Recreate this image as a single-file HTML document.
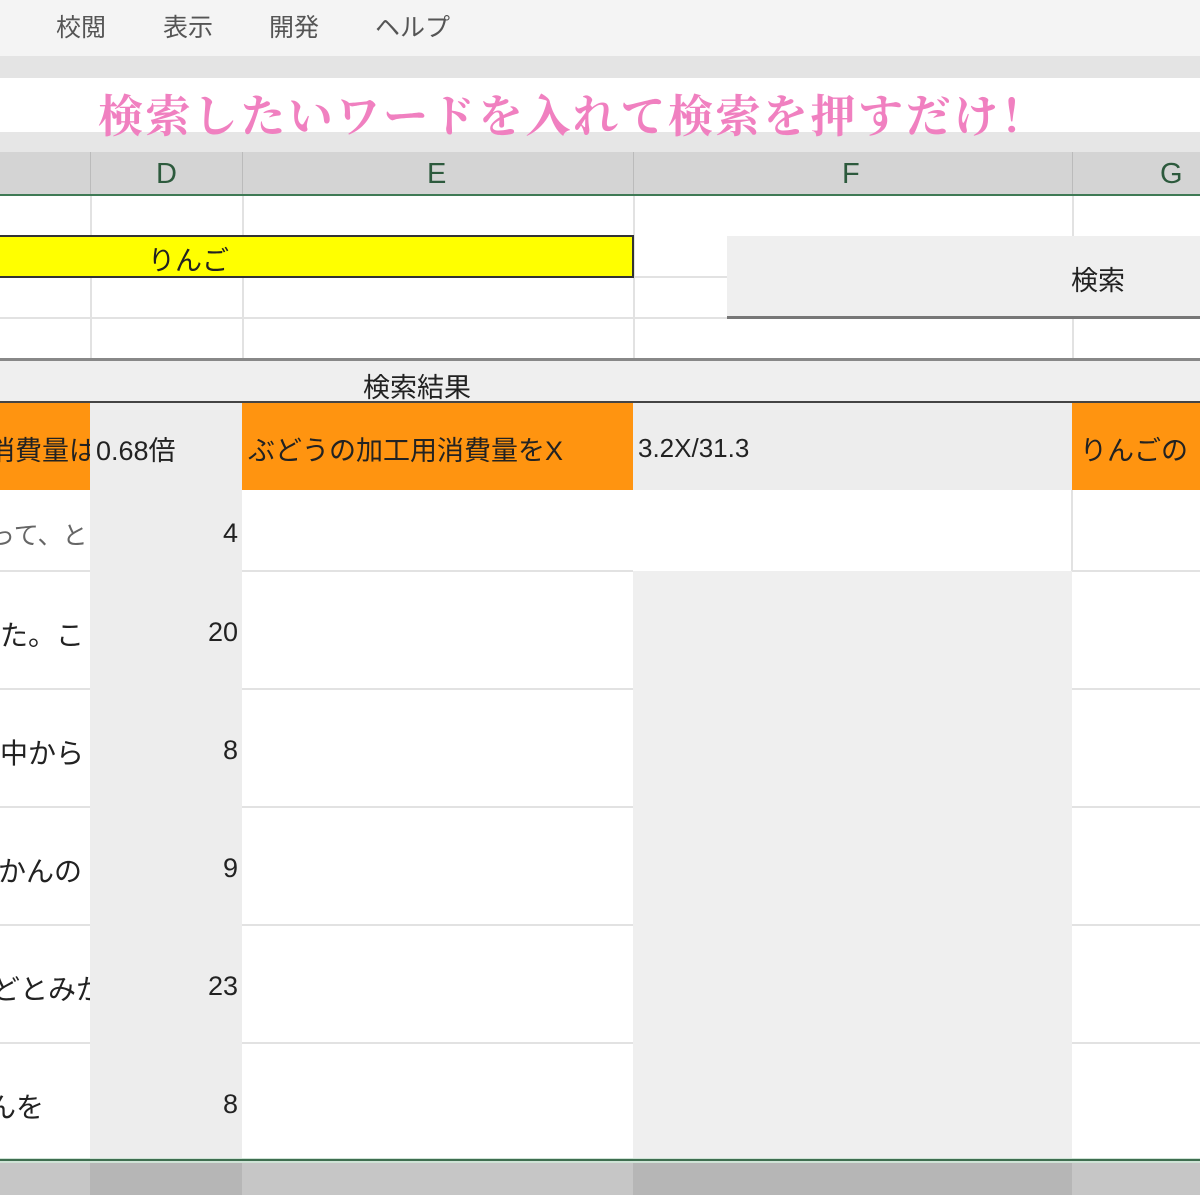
<!DOCTYPE html>
<html><head><meta charset="utf-8"><style>
body{margin:0;width:1200px;height:1195px;position:relative;overflow:hidden;background:#fff;font-family:"Liberation Sans","Noto Sans CJK JP",sans-serif;}
div{position:absolute;box-sizing:border-box;}
.t{white-space:nowrap;overflow:hidden;font-size:27px;color:#222;}
.hl{height:2px;background:#e2e2e2;}
.vl{width:2px;background:#e2e2e2;}
</style></head><body>
<div style="left:0;top:0;width:1200px;height:56px;background:#f4f4f4;"></div>
<div class="t" style="left:56px;top:8px;font-size:25px;color:#555;">校閲</div>
<div class="t" style="left:163px;top:8px;font-size:25px;color:#555;">表示</div>
<div class="t" style="left:269px;top:8px;font-size:25px;color:#555;">開発</div>
<div class="t" style="left:375px;top:8px;font-size:25px;color:#555;">ヘルプ</div>
<div style="left:0;top:56px;width:1200px;height:22px;background:#e4e4e4;"></div>
<div style="left:0;top:78px;width:1200px;height:54px;background:#fff;"></div>
<div style="left:0;top:132px;width:1200px;height:20px;background:#e6e6e6;"></div>
<div class="t" style="left:98px;top:80px;font-size:45px;letter-spacing:2.5px;color:#f080c0;font-family:'Noto Serif CJK SC','Liberation Serif',serif;font-weight:bold;overflow:visible;">検索したいワードを入れて検索を押すだけ！</div>
<div style="left:0;top:152px;width:1200px;height:43px;background:#d4d4d4;"></div>
<div style="left:0;top:194px;width:1200px;height:2px;background:#3f7a55;"></div>
<div class="vl" style="left:90px;top:152px;height:42px;background:#bbb;width:1px"></div>
<div class="vl" style="left:242px;top:152px;height:42px;background:#bbb;width:1px"></div>
<div class="vl" style="left:633px;top:152px;height:42px;background:#bbb;width:1px"></div>
<div class="vl" style="left:1072px;top:152px;height:42px;background:#bbb;width:1px"></div>
<div class="t" style="left:156px;top:158px;font-size:29px;color:#2d5a3d;">D</div>
<div class="t" style="left:427px;top:158px;font-size:29px;color:#2d5a3d;">E</div>
<div class="t" style="left:842px;top:158px;font-size:29px;color:#2d5a3d;">F</div>
<div class="t" style="left:1160px;top:158px;font-size:29px;color:#2d5a3d;">G</div>
<div class="vl" style="left:90px;top:196px;height:162px;"></div>
<div class="vl" style="left:242px;top:196px;height:162px;"></div>
<div class="vl" style="left:633px;top:196px;height:162px;"></div>
<div class="vl" style="left:1072px;top:196px;height:162px;"></div>
<div class="hl" style="left:0;top:276px;width:727px;"></div>
<div class="hl" style="left:0;top:317px;width:1200px;"></div>
<div style="left:0;top:235px;width:634px;height:43px;background:#ffff00;border:2px solid #333;border-left:none;"></div>
<div class="t" style="left:148px;top:239px;">りんご</div>
<div style="left:727px;top:236px;width:473px;height:83px;background:#efefef;border-bottom:3px solid #777;"></div>
<div class="t" style="left:1071px;top:259px;">検索</div>
<div style="left:0;top:358px;width:1200px;height:45px;background:#efefef;border-top:3px solid #888;border-bottom:2px solid #444;"></div>
<div class="t" style="left:363px;top:366px;">検索結果</div>
<div style="left:90px;top:403px;width:152px;height:757px;background:#ededed;"></div>
<div style="left:633px;top:403px;width:439px;height:87px;background:#ededed;"></div>
<div style="left:633px;top:571px;width:439px;height:589px;background:#efefef;"></div>
<div style="left:0;top:403px;width:90px;height:87px;background:#ff9410;"></div>
<div style="left:242px;top:403px;width:391px;height:87px;background:#ff9410;"></div>
<div style="left:1072px;top:403px;width:128px;height:87px;background:#ff9410;"></div>
<div class="t" style="left:0;top:429px;width:90px;"><span style="margin-left:-12px">消費量は</span></div>
<div class="t" style="left:96px;top:429px;">0.68倍</div>
<div class="t" style="left:248px;top:429px;width:384px;">ぶどうの加工用消費量をX</div>
<div class="t" style="left:638px;top:433px;font-size:26px;">3.2X/31.3</div>
<div class="t" style="left:1080px;top:429px;width:120px;">りんごの</div>
<div class="hl" style="left:0;top:570px;width:90px;"></div><div class="hl" style="left:242px;top:570px;width:391px;"></div><div class="hl" style="left:1072px;top:570px;width:128px;"></div>
<div class="hl" style="left:0;top:688px;width:90px;"></div><div class="hl" style="left:242px;top:688px;width:391px;"></div><div class="hl" style="left:1072px;top:688px;width:128px;"></div>
<div class="hl" style="left:0;top:806px;width:90px;"></div><div class="hl" style="left:242px;top:806px;width:391px;"></div><div class="hl" style="left:1072px;top:806px;width:128px;"></div>
<div class="hl" style="left:0;top:924px;width:90px;"></div><div class="hl" style="left:242px;top:924px;width:391px;"></div><div class="hl" style="left:1072px;top:924px;width:128px;"></div>
<div class="hl" style="left:0;top:1042px;width:90px;"></div><div class="hl" style="left:242px;top:1042px;width:391px;"></div><div class="hl" style="left:1072px;top:1042px;width:128px;"></div>
<div class="vl" style="left:1071px;top:490px;height:81px;"></div>
<div class="t" style="left:0;top:516px;width:90px;color:#666;font-size:25px;"><span style="margin-left:-10px">って、と</span></div>
<div class="t" style="left:0;top:614px;width:90px;font-size:28px;"><span>た。こ</span></div>
<div class="t" style="left:0;top:732px;width:90px;font-size:28px;"><span>中から</span></div>
<div class="t" style="left:0;top:850px;width:90px;font-size:28px;"><span style="margin-left:-30px">みかんの</span></div>
<div class="t" style="left:0;top:968px;width:90px;font-size:28px;"><span style="margin-left:-8px">どとみか</span></div>
<div class="t" style="left:0;top:1086px;width:90px;font-size:28px;"><span style="margin-left:-12px">んを</span></div>
<div class="t" style="left:90px;top:518px;width:148px;text-align:right;">4</div>
<div class="t" style="left:90px;top:617px;width:148px;text-align:right;">20</div>
<div class="t" style="left:90px;top:735px;width:148px;text-align:right;">8</div>
<div class="t" style="left:90px;top:853px;width:148px;text-align:right;">9</div>
<div class="t" style="left:90px;top:971px;width:148px;text-align:right;">23</div>
<div class="t" style="left:90px;top:1089px;width:148px;text-align:right;">8</div>
<div style="left:0;top:1158px;width:1200px;height:5px;background:#cfe3d6;"></div>
<div style="left:0;top:1159px;width:1200px;height:2px;background:#3f6e50;"></div>
<div style="left:0;top:1163px;width:1200px;height:32px;background:#c6c6c6;"></div>
<div style="left:90px;top:1163px;width:152px;height:32px;background:#b6b6b6;"></div>
<div style="left:633px;top:1163px;width:439px;height:32px;background:#b6b6b6;"></div>
</body></html>
